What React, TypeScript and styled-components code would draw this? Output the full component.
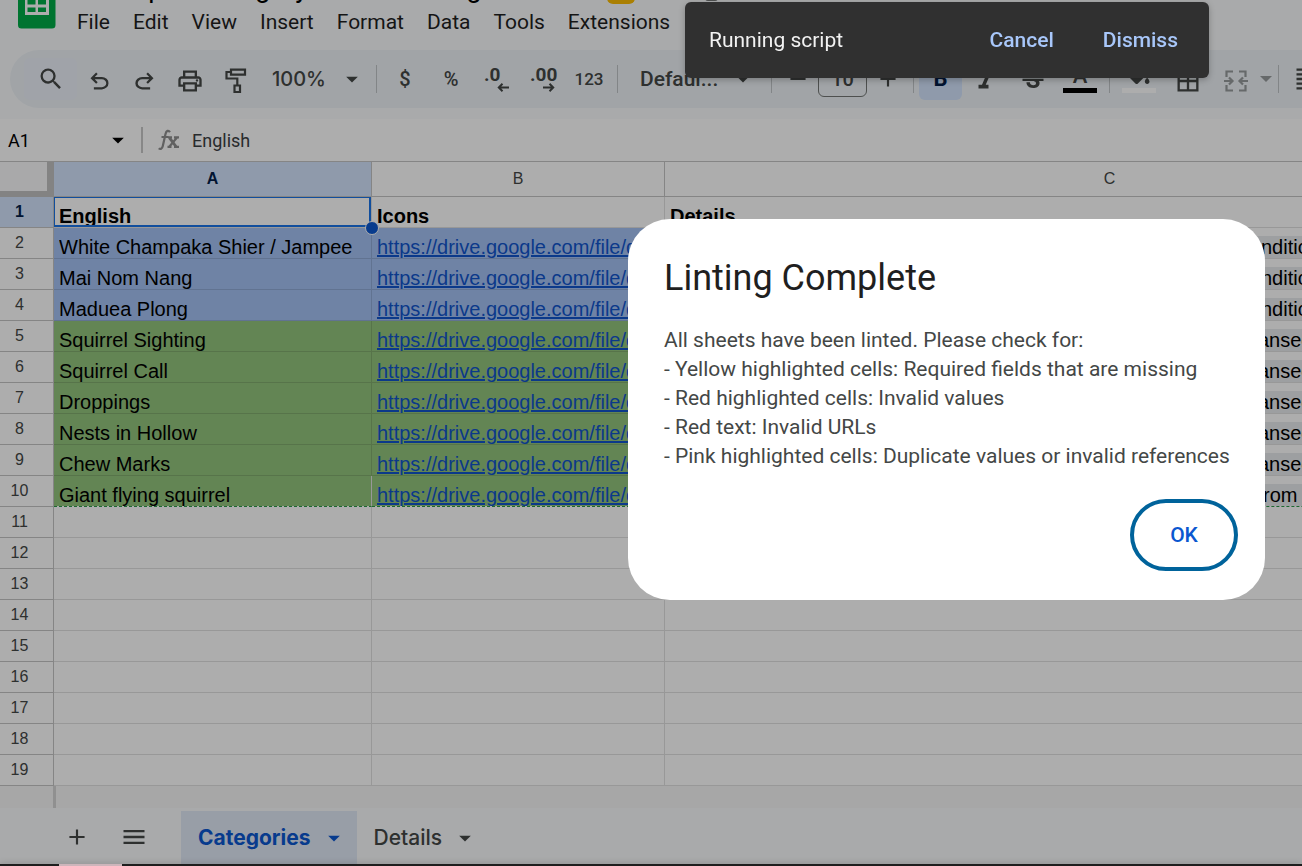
import React from "react";
import styled, { createGlobalStyle, css } from "styled-components";
import { MdArrowDropDown, MdMenu, MdOutlinePrint, MdSearch, MdAdd, MdRemove, MdFormatItalic, MdStrikethroughS, MdBorderAll, MdFormatAlignJustify } from "react-icons/md";

const GlobalStyle = createGlobalStyle`
  * { box-sizing: border-box; }
  body {
    margin: 0;
    background: #f9fbfd;
    font-family: Roboto, "Liberation Sans", sans-serif;
    color: #1f1f1f;
    overflow: hidden;
  }
  button { border: 0; padding: 0; background: none; font: inherit; color: inherit; }
  svg { display: block; flex: none; }
`;

const Page = styled.div`
  display: flex;
  flex-direction: column;
  height: 100vh;
  overflow: hidden;
`;

/* Header */
const Header = styled.header`
  display: flex;
  height: 50px;
  flex: none;
  padding-left: 18px;
  gap: 21px;
`;
const HeaderText = styled.div`
  display: flex;
  flex-direction: column;
  min-width: 0;
`;
const TitleRow = styled.div`
  display: flex;
  align-items: flex-end;
  height: 7px;
  overflow: hidden;
`;
const Title = styled.h1`
  margin: 0 0 3px;
  width: 530px;
  font-size: 27px;
  line-height: 32px;
  font-weight: 400;
  color: #000;
  white-space: nowrap;
`;
const NewBadge = styled.span`
  width: 28px;
  height: 24px;
  margin-bottom: 3px;
  border-radius: 6px;
  background: #fbbc04;
`;
const CloudMark = styled.span`
  width: 13px;
  height: 24px;
  margin: 0 0 6px 70px;
  border-radius: 3px;
  background: #747775;
`;
const MenuBar = styled.nav`
  display: flex;
  gap: 23px;
  height: 30px;
  font-size: 21px;
  line-height: 30px;
`;

/* Toolbar */
const Toolbar = styled.div`
  display: flex;
  align-items: center;
  flex: none;
  height: 58px;
  margin-left: 10px;
  padding-left: 14px;
  border-radius: 29px 0 0 29px;
  background: #edf2f6;
  color: #444746;
  overflow: hidden;
`;
const Tool = styled.button<{ $w?: number; $tint?: string; $dim?: boolean }>`
  display: flex;
  flex: none;
  flex-direction: column;
  align-items: center;
  justify-content: center;
  width: ${(p) => p.$w ?? 46}px;
  height: 42px;
  border-radius: 6px;
  font-size: 20px;
  font-weight: 500;
  background: ${(p) => p.$tint ?? "transparent"};
  opacity: ${(p) => (p.$dim ? 0.5 : 1)};
`;
const IconTool = styled(Tool)`
  padding-top: 4px;
`;
const NumberFormat = styled(Tool)`
  font-size: 17px;
`;
const Divider = styled.span`
  flex: none;
  width: 1px;
  height: 28px;
  margin: 0 5px;
  background: #c0c4c8;
`;
const Picker = styled.button<{ $w: number }>`
  display: flex;
  flex: none;
  align-items: center;
  justify-content: space-between;
  width: ${(p) => p.$w}px;
  height: 42px;
  font-weight: 500;
`;
const ZoomPicker = styled(Picker)`
  padding: 0 5px 0 14px;
  font-family: Inter, Roboto, sans-serif;
  font-size: 20px;
`;
const FontPicker = styled(Picker)`
  padding: 0 9px 0 17px;
  font-size: 21px;
`;
const SizeInput = styled.input`
  flex: none;
  width: 49px;
  height: 36px;
  padding: 0;
  border: 1px solid #747775;
  border-radius: 6px;
  background: transparent;
  color: #444746;
  font: 500 20px Roboto, sans-serif;
  text-align: center;
`;
const Decimal = styled.span`
  font: 700 19px/16px Roboto, sans-serif;
  align-self: flex-start;
  padding-left: 10px;
`;
const ArrowLine = styled.span`
  align-self: flex-end;
  padding-right: 11px;
`;
const ColorTool = styled(Tool)<{ $bar: string }>`
  justify-content: flex-end;
  padding-bottom: 7px;
  &::after {
    content: "";
    width: 34px;
    height: 5px;
    margin-top: 4px;
    background: ${(p) => p.$bar};
  }
`;
const Glyph = styled.span`
  font: 500 22px/16px Roboto, sans-serif;
`;
const BoldGlyph = styled.span`
  font: 700 22px/22px Roboto, sans-serif;
  color: #041e49;
`;

/* Formula bar */
const FormulaBar = styled.div`
  display: flex;
  align-items: center;
  flex: none;
  height: 42px;
  margin-top: 11px;
  background: #fff;
  color: #1f1f1f;
  font-size: 18px;
`;
const NameBox = styled.button`
  display: flex;
  align-items: center;
  justify-content: space-between;
  width: 141px;
  padding: 0 9px 0 8px;
  color: #000;
`;
const BarRule = styled.span`
  width: 2px;
  height: 26px;
  background: #c7c7c7;
`;
const Fx = styled.span`
  width: 49px;
  padding-left: 15px;
`;
const FormulaInput = styled.input`
  flex: 1;
  min-width: 0;
  border: 0;
  padding: 0;
  background: transparent;
  color: #3c4043;
  font: 18px Roboto, sans-serif;
`;

/* Sheet */
const Grid = styled.div`
  flex: none;
  overflow: hidden;
  background: #fff;
`;
const Table = styled.table`
  table-layout: fixed;
  width: 1555px;
  border-spacing: 0;
  border-top: 1px solid #c4c4c4;
  font-family: "Liberation Sans", Arial, sans-serif;
`;
const Corner = styled.th`
  width: 54px;
  height: 35px;
  padding: 0;
  border-right: 7px solid #c2c2c2;
  border-bottom: 6px solid #c2c2c2;
  background: #f9fafb;
`;
const headerTint = css`
  background: #d3e3fd;
  color: #041e49;
  font-weight: 700;
`;
const ColHead = styled.th<{ $w: number; $on?: boolean }>`
  width: ${(p) => p.$w}px;
  height: 35px;
  padding: 0;
  border-right: 1px solid #c4c4c4;
  border-bottom: 1px solid #c4c4c4;
  font-size: 16px;
  font-weight: 400;
  color: #444746;
  ${(p) => p.$on && headerTint}
`;
const RowHead = styled.th<{ $on?: boolean }>`
  height: 31px;
  padding: 0 14px 0 0;
  border-right: 1px solid #c4c4c4;
  border-bottom: 1px solid #c4c4c4;
  font-size: 16px;
  line-height: 18px;
  font-weight: 400;
  color: #444746;
  ${(p) => p.$on && headerTint}
`;
const Cell = styled.td<{ $fill?: string; $bold?: boolean; $last?: boolean }>`
  position: relative;
  height: 31px;
  padding: 0 0 0 5px;
  border-right: 1px solid rgba(0, 0, 0, 0.12);
  border-bottom: 1px solid rgba(0, 0, 0, 0.12);
  background: ${(p) => p.$fill ?? "transparent"};
  ${(p) => p.$last && css`
    border-bottom: 1px dashed #2a9a48;
    background-clip: padding-box;
  `}
  color: #000;
  font-size: 20px;
  font-weight: ${(p) => (p.$bold ? 700 : 400)};
`;
const Clip = styled.div`
  height: 30px;
  padding-top: 7px;
  line-height: 24px;
  white-space: nowrap;
  overflow: hidden;
`;
const CellLink = styled.a`
  color: #1155cc;
  text-decoration: underline;
`;
const Chip = styled.span`
  background: #e8eaed;
`;
const Lead = styled.span<{ $w: number }>`
  display: inline-block;
  width: ${(p) => p.$w}px;
  vertical-align: bottom;
  text-align: right;
`;
const Selection = styled.span`
  position: absolute;
  inset: 0;
  border: solid #1a73e8;
  border-width: 1px 2px 2px 1px;
`;
const Handle = styled.span`
  position: absolute;
  z-index: 1;
  right: -8px;
  bottom: -8px;
  width: 14px;
  height: 14px;
  border: 1px solid #fff;
  border-radius: 50%;
  background: #0b57d0;
`;

const ScrollStrip = styled.div`
  flex: none;
  height: 22px;
  padding-left: 53px;
  background: #f7f7f7;
  &::before {
    content: "";
    display: block;
    width: 3px;
    height: 22px;
    background: #d4d4d4;
  }
`;
const TabBar = styled.footer`
  display: flex;
  align-items: center;
  flex: none;
  height: 58px;
  padding: 3px 0 3px 48px;
  background: #f9fbfd;
  color: #444746;
`;
const BarButton = styled.button`
  display: flex;
  align-items: center;
  justify-content: center;
  width: 57px;
  height: 46px;
`;
const TabList = styled.div`
  display: flex;
  align-self: stretch;
  margin-left: 19px;
`;
const Tab = styled.button<{ $on?: boolean }>`
  display: flex;
  align-items: center;
  gap: 9px;
  height: 53px;
  padding: 0 9px 0 17px;
  font: ${(p) => (p.$on ? 700 : 500)} 21px Inter, Roboto, sans-serif;
  color: ${(p) => (p.$on ? "#0b57d0" : "#444746")};
  background: ${(p) => (p.$on ? "#e1e9f7" : "transparent")};
`;

/* Overlays */
const Scrim = styled.div`
  position: fixed;
  inset: 0;
  z-index: 5;
  display: flex;
  justify-content: flex-end;
  align-items: flex-start;
  padding: 219px 37px 0 0;
  background: rgba(0, 0, 0, 0.32);
`;
const Dialog = styled.section`
  width: 637px;
  padding: 36px 27px 29px 36px;
  border-radius: 42px;
  background: #fff;
`;
const DialogTitle = styled.h2`
  margin: 0;
  font-size: 36px;
  line-height: 46px;
  font-weight: 400;
  color: #1f1f1f;
`;
const DialogText = styled.p`
  margin: 25px 0 28px;
  font-size: 21px;
  line-height: 29px;
  color: #444746;
  white-space: pre-line;
`;
const DialogActions = styled.div`
  display: flex;
  justify-content: flex-end;
`;
const OkButton = styled.button`
  width: 108px;
  height: 72px;
  border: 4px solid #00639b;
  border-radius: 36px;
  font-size: 21px;
  font-weight: 500;
  color: #0b57d0;
`;
const Snackbar = styled.div`
  position: fixed;
  z-index: 6;
  top: 2px;
  right: 93px;
  display: flex;
  align-items: center;
  width: 524px;
  height: 76px;
  padding: 0 31px 0 24px;
  gap: 49px;
  border-radius: 6px;
  background: #303030;
  box-shadow: 0 2px 6px rgba(0, 0, 0, 0.25);
  color: #f2f2f2;
  font-size: 21px;
`;
const SnackText = styled.span`
  flex: 1;
`;
const SnackAction = styled.button`
  font-weight: 500;
  color: #a8c7fa;
`;
const Dock = styled.div`
  position: fixed;
  z-index: 6;
  left: 0;
  right: 0;
  bottom: 0;
  height: 2px;
  padding-left: 59px;
  background: #1e1e1e;
  box-shadow: 0 0 6px rgba(0, 0, 0, 0.3);
`;
const DockItem = styled.div`
  width: 63px;
  height: 2px;
  background: #cdb5bb;
`;

const Caret = () => (
  <svg width="12" height="6" viewBox="0 0 12 6" fill="currentColor"><path d="M0 0h12L6 6z" /></svg>
);
const SheetsLogo = () => (
  <svg width="38" height="29" viewBox="0 0 38 29">
    <path d="M0 0H37.500V25a3.500 3.500 0 0 1-3.500 3.500H3.500A3.500 3.500 0 0 1 0 25z" fill="#00ac47" />
    <path d="M7 0H31V15H7z" fill="#fff" />
    <path d="M9.500 0h8v4.500h-8zM20 0h8v4.500h-8zM9.500 7.500h8v4.500h-8zM20 7.500h8v4.500h-8z" fill="#00ac47" />
  </svg>
);
const Undo = () => (
  <svg width="27" height="27" viewBox="0 -960 960 960" fill="currentColor"><path d="M280-200v-80h284q63 0 109.500-40T720-420q0-60-46.500-100T564-560H312l104 104-56 56-200-200 200-200 56 56-104 104h252q97 0 169.500 63T800-420q0 94-72.500 157T564-200H280Z" /></svg>
);
const Redo = () => (
  <svg width="27" height="27" viewBox="0 -960 960 960" fill="currentColor"><path d="M396-200q-97 0-169.500-63T154-420q0-94 72.500-157T396-640h252L544-744l56-56 200 200-200 200-56-56 104-104H396q-63 0-109.500 40T240-420q0 60 46.500 100T396-280h284v80H396Z" /></svg>
);
const PaintRoller = () => (
  <svg width="22" height="26" viewBox="0 0 22 26" fill="none" stroke="currentColor" strokeWidth="2.200">
    <path d="M6 1.600h14v5H6zM6 4H1.500v6.500h10.800V17M9.500 17.500h5.500v6.500H9.500z" />
  </svg>
);
const FillBucket = () => (
  <svg width="28" height="20" viewBox="0 0 24 17" fill="currentColor">
    <path d="M16.560 8.940L7.620 0 6.210 1.410l2.380 2.380-5.150 5.150c-.59.59-.59 1.540 0 2.120l5.500 5.500c.29.29.68.44 1.060.44s.77-.15 1.060-.44l5.500-5.500c.59-.58.59-1.530 0-2.120zM5.210 10L10 5.210 14.790 10H5.210zM19 11.500s-2 2.170-2 3.500c0 1.100.9 2 2 2s2-.9 2-2c0-1.330-2-3.500-2-3.500z" />
  </svg>
);
const ArrowLeft = () => (
  <svg width="12" height="9" viewBox="0 0 12 9" fill="none" stroke="currentColor" strokeWidth="2"><path d="M12 4.500H2M5.500 0.800L1.800 4.500 5.500 8.200" /></svg>
);
const ArrowRight = () => (
  <svg width="12" height="9" viewBox="0 0 12 9" fill="none" stroke="currentColor" strokeWidth="2"><path d="M0 4.500h10M6.500 0.800l3.700 3.700-3.700 3.700" /></svg>
);
const Merge = () => (
  <svg width="24" height="22" viewBox="0 0 24 22" fill="none" stroke="currentColor" strokeWidth="2.200">
    <path d="M9 1.500H2.500V7M15 1.500h6.500V7M9 20.500H2.500V15M15 20.500h6.500V15M0 11h8M5 7.500L8.500 11 5 14.500M24 11h-8M19 7.500L15.500 11l3.500 3.500" />
  </svg>
);
const FxIcon = () => (
  <svg width="22" height="22" viewBox="0 0 22 22" fill="none" stroke="#8f8f8f" strokeWidth="2.200">
    <path d="M12 3.200C10.500 0.800 8.300 1.500 7.500 5L4.800 17c-.6 2.800-2.500 3.800-4 2.200M3.500 8h7" />
    <path strokeWidth="2.800" d="M11.500 8.800L18 17.500" />
    <path d="M10 8.300h4M16 8.300h5M19 8.500L11.500 17.500M9.500 17.800h4M16 17.800h5" />
  </svg>
);

const MENUS = ["File", "Edit", "View", "Insert", "Format", "Data", "Tools", "Extensions"];
const BLUE = "#a4c2f4";
const GREEN = "#93c47d";
const ROWS = [
  { name: "White Champaka Shier / Jampee", fill: BLUE, lead: "height, flower, photo, co", tail: "ndition" },
  { name: "Mai Nom Nang", fill: BLUE, lead: "height, flower, photo, co", tail: "ndition" },
  { name: "Maduea Plong", fill: BLUE, lead: "height, flower, photo, co", tail: "ndition" },
  { name: "Squirrel Sighting", fill: GREEN, lead: "species, count, tr", tail: "ansect" },
  { name: "Squirrel Call", fill: GREEN, lead: "species, count, tr", tail: "ansect" },
  { name: "Droppings", fill: GREEN, lead: "species, count, tr", tail: "ansect" },
  { name: "Nests in Hollow", fill: GREEN, lead: "species, count, tr", tail: "ansect" },
  { name: "Chew Marks", fill: GREEN, lead: "species, count, tr", tail: "ansect" },
  { name: "Giant flying squirrel", fill: GREEN, lead: "species, distance f", tail: "rom transect" },
];
const EMPTY_ROWS = [11, 12, 13, 14, 15, 16, 17, 18, 19];

export default function App() {
  return (
    <Page>
      <GlobalStyle />
      <Header>
        <SheetsLogo />
        <HeaderText>
          <TitleRow>
            <Title>CoMapeo Category Sheets Config</Title>
            <NewBadge />
            <CloudMark />
          </TitleRow>
          <MenuBar>
            {MENUS.map((m) => <button key={m}>{m}</button>)}
          </MenuBar>
        </HeaderText>
      </Header>

      <Toolbar>
        <Tool $w={53} $tint="#ecf0fa" aria-label="Search"><MdSearch size={28} /></Tool>
        <IconTool $w={45} aria-label="Undo"><Undo /></IconTool>
        <IconTool $w={45} aria-label="Redo"><Redo /></IconTool>
        <IconTool $w={46} aria-label="Print"><MdOutlinePrint size={28} /></IconTool>
        <IconTool $w={45} aria-label="Paint format"><PaintRoller /></IconTool>
        <ZoomPicker $w={113} aria-label="Zoom">100%<MdArrowDropDown size={28} /></ZoomPicker>
        <Divider />
        <Tool>$</Tool>
        <Tool>%</Tool>
        <Tool aria-label="Decrease decimal places"><Decimal>.0</Decimal><ArrowLine><ArrowLeft /></ArrowLine></Tool>
        <Tool aria-label="Increase decimal places"><Decimal>.00</Decimal><ArrowLine><ArrowRight /></ArrowLine></Tool>
        <NumberFormat>123</NumberFormat>
        <Divider />
        <FontPicker $w={143} aria-label="Font">Defaul...<MdArrowDropDown size={28} /></FontPicker>
        <Divider />
        <Tool $w={41} aria-label="Decrease font size"><MdRemove size={26} /></Tool>
        <SizeInput aria-label="Font size" defaultValue="10" />
        <Tool $w={41} aria-label="Increase font size"><MdAdd size={26} /></Tool>
        <Divider />
        <Tool $w={43} $tint="#d3e3fd" aria-label="Bold"><BoldGlyph>B</BoldGlyph></Tool>
        <IconTool $w={47} aria-label="Italic"><MdFormatItalic size={30} /></IconTool>
        <IconTool $w={47} aria-label="Strikethrough"><MdStrikethroughS size={28} /></IconTool>
        <ColorTool $w={48} $bar="#000" aria-label="Text color"><Glyph>A</Glyph></ColorTool>
        <Divider />
        <ColorTool $w={48} $bar="#fff" aria-label="Fill color"><FillBucket /></ColorTool>
        <IconTool $w={49} aria-label="Borders"><MdBorderAll size={28} /></IconTool>
        <IconTool $w={47} $dim aria-label="Merge cells"><Merge /></IconTool>
        <Tool $w={14} $dim aria-label="Merge options"><Caret /></Tool>
        <Divider />
        <Tool aria-label="Align"><MdFormatAlignJustify size={28} /></Tool>
      </Toolbar>

      <FormulaBar>
        <NameBox>A1<MdArrowDropDown size={28} /></NameBox>
        <BarRule />
        <Fx><FxIcon /></Fx>
        <FormulaInput aria-label="Formula" defaultValue="English" />
      </FormulaBar>

      <Grid>
        <Table>
          <thead>
            <tr>
              <Corner />
              <ColHead $w={318} $on>A</ColHead>
              <ColHead $w={293}>B</ColHead>
              <ColHead $w={890}>C</ColHead>
            </tr>
          </thead>
          <tbody>
            <tr>
              <RowHead $on>1</RowHead>
              <Cell $bold><Clip>English</Clip><Selection /><Handle /></Cell>
              <Cell $bold><Clip>Icons</Clip></Cell>
              <Cell $bold><Clip>Details</Clip></Cell>
            </tr>
            {ROWS.map((r, i) => {
              const last = i === ROWS.length - 1;
              return (
                <tr key={r.name}>
                  <RowHead>{i + 2}</RowHead>
                  <Cell $fill={r.fill} $last={last}><Clip>{r.name}</Clip></Cell>
                  <Cell $fill={r.fill} $last={last}><Clip><CellLink href="#">https://drive.google.com/file/d/1xK</CellLink></Clip></Cell>
                  <Cell $last={last}><Clip><Chip><Lead $w={i < 3 ? 591 : last ? 593 : 588}>{r.lead}</Lead>{r.tail}</Chip></Clip></Cell>
                </tr>
              );
            })}
            {EMPTY_ROWS.map((n) => (
              <tr key={n}><RowHead>{n}</RowHead><Cell /><Cell /><Cell /></tr>
            ))}
          </tbody>
        </Table>
      </Grid>
      <ScrollStrip />
      <TabBar>
        <BarButton aria-label="Add sheet"><MdAdd size={26} /></BarButton>
        <BarButton aria-label="All sheets"><MdMenu size={28} /></BarButton>
        <TabList>
          <Tab $on>Categories<MdArrowDropDown size={28} /></Tab>
          <Tab>Details<MdArrowDropDown size={28} /></Tab>
        </TabList>
      </TabBar>

      <Scrim>
        <Dialog role="dialog" aria-labelledby="dialog-title">
          <DialogTitle id="dialog-title">Linting Complete</DialogTitle>
          <DialogText>
            {"All sheets have been linted. Please check for:\n- Yellow highlighted cells: Required fields that are missing\n- Red highlighted cells: Invalid values\n- Red text: Invalid URLs\n- Pink highlighted cells: Duplicate values or invalid references"}
          </DialogText>
          <DialogActions><OkButton>OK</OkButton></DialogActions>
        </Dialog>
      </Scrim>
      <Snackbar role="status">
        <SnackText>Running script</SnackText>
        <SnackAction>Cancel</SnackAction>
        <SnackAction>Dismiss</SnackAction>
      </Snackbar>
      <Dock><DockItem /></Dock>
    </Page>
  );
}
